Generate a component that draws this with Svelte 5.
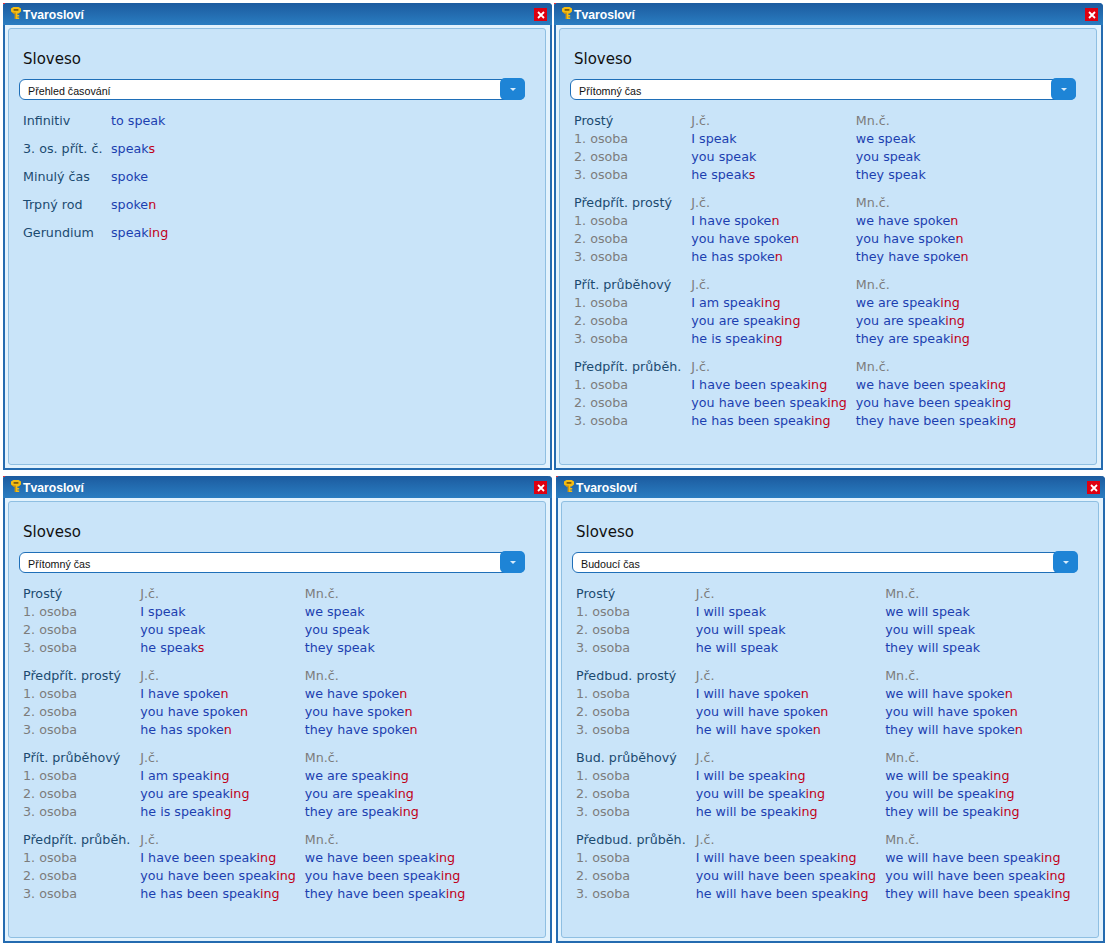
<script>
  const present = [
    { t: 'Prostý', s: [[['I speak', ''], ['we speak', '']], [['you speak', ''], ['you speak', '']], [['he speak', 's'], ['they speak', '']]] },
    { t: 'Předpřít. prostý', s: [[['I have spoke', 'n'], ['we have spoke', 'n']], [['you have spoke', 'n'], ['you have spoke', 'n']], [['he has spoke', 'n'], ['they have spoke', 'n']]] },
    { t: 'Přít. průběhový', s: [[['I am speak', 'ing'], ['we are speak', 'ing']], [['you are speak', 'ing'], ['you are speak', 'ing']], [['he is speak', 'ing'], ['they are speak', 'ing']]] },
    { t: 'Předpřít. průběh.', s: [[['I have been speak', 'ing'], ['we have been speak', 'ing']], [['you have been speak', 'ing'], ['you have been speak', 'ing']], [['he has been speak', 'ing'], ['they have been speak', 'ing']]] }
  ];
  const future = [
    { t: 'Prostý', s: [[['I will speak', ''], ['we will speak', '']], [['you will speak', ''], ['you will speak', '']], [['he will speak', ''], ['they will speak', '']]] },
    { t: 'Předbud. prostý', s: [[['I will have spoke', 'n'], ['we will have spoke', 'n']], [['you will have spoke', 'n'], ['you will have spoke', 'n']], [['he will have spoke', 'n'], ['they will have spoke', 'n']]] },
    { t: 'Bud. průběhový', s: [[['I will be speak', 'ing'], ['we will be speak', 'ing']], [['you will be speak', 'ing'], ['you will be speak', 'ing']], [['he will be speak', 'ing'], ['they will be speak', 'ing']]] },
    { t: 'Předbud. průběh.', s: [[['I will have been speak', 'ing'], ['we will have been speak', 'ing']], [['you will have been speak', 'ing'], ['you will have been speak', 'ing']], [['he will have been speak', 'ing'], ['they will have been speak', 'ing']]] }
  ];
  const overview = [
    ['Infinitiv', 'to speak', ''],
    ['3. os. přít. č.', 'speak', 's'],
    ['Minulý čas', 'spoke', ''],
    ['Trpný rod', 'spoke', 'n'],
    ['Gerundium', 'speak', 'ing']
  ];
  const windows = [
    { sel: 'Přehled časování', cls: 'w1' },
    { sel: 'Přítomný čas', groups: present, cls: 'w2' },
    { sel: 'Přítomný čas', groups: present, cls: 'w3' },
    { sel: 'Budoucí čas', groups: future, cls: 'w4' }
  ];
</script>

<div class="desk">
  {#each windows as w}
    <section class="win {w.cls}">
      <header class="bar">
        <svg class="key" width="10" height="12" viewBox="0 0 10 12" aria-hidden="true">
          <path d="M2.4 0H7.6L10 1.6V4.4L7.6 6.4H6.4V8H8.2V9.4H6.4V10.4H8.2V12H3.8V6.4H2.4L0 4.4V1.6Z" fill="#f5bd12"/>
          <path d="M0 4.4L2.4 6.4H3.8V12H4.8V5.4H2.6Z" fill="#c98c0a"/>
          <rect x="2.6" y="2" width="4.8" height="1.8" fill="#7d5c10"/>
        </svg>
        <span class="title">Tvarosloví</span>
        <span class="close">
          <svg width="8" height="8" viewBox="0 0 8 8" aria-hidden="true"><path d="M1 1L7 7M7 1L1 7" stroke="#fff" stroke-width="1.8"/></svg>
        </span>
      </header>
      <div class="panel">
        <h2>Sloveso</h2>
        <div class="select">
          <span class="val">{w.sel}</span>
          <span class="btn"><i></i></span>
        </div>
        {#if w.groups}
          <table>
            <tbody>
              {#each w.groups as g, gi}
                <tr class:gap={gi > 0}>
                  <td class="head">{g.t}</td><td class="num second">J.č.</td><td class="num">Mn.č.</td>
                </tr>
                {#each g.s as row, i}
                  <tr>
                    <td class="num">{i + 1}. osoba</td>
                    {#each row as c}
                      <td class="form second">{c[0]}<b>{c[1]}</b></td>
                    {/each}
                  </tr>
                {/each}
              {/each}
            </tbody>
          </table>
        {:else}
          <div class="over">
            {#each overview as r}
              <span class="head">{r[0]}</span><span class="form">{r[1]}<b>{r[2]}</b></span>
            {/each}
          </div>
        {/if}
      </div>
    </section>
  {/each}
</div>

<style>
  :global(body) { margin: 0; background: #fff; }
  .desk {
    width: 1109px;
    height: 945px;
    box-sizing: border-box;
    padding: 3px 0 0 3px;
    display: grid;
    grid-template-columns: 551px 550px;
    grid-template-rows: 473px 466px;
    font-family: "DejaVu Sans", sans-serif;
    font-size: 12.7px;
  }
  .win {
    position: relative;
    width: 549px;
    height: 467px;
    box-sizing: border-box;
    border: 2px solid #246bb0;
    border-top: 0;
    border-radius: 3px 4px 0 0;
    background: #e2f2fd;
    display: flex;
    flex-direction: column;
  }
  .win::before {
    content: "";
    position: absolute;
    z-index: 1;
    top: 0;
    left: -2px;
    width: 2px;
    height: 1px;
    background: #e0303a;
  }
  .w4 { margin-left: 2px; }
  .bar {
    height: 22px;
    flex: none;
    margin: 0 -2px;
    padding: 0 5px 0 8px;
    display: flex;
    align-items: center;
    border-radius: 3px 4px 0 0;
    background: linear-gradient(#1c5b9f, #2a7dc1);
  }
  .key { flex: none; margin-top: -2px; }
  .title {
    margin: 2px 0 0 2px;
    color: #fff;
    font: bold 12.2px "Liberation Sans", sans-serif;
  }
  .close {
    margin-left: auto;
    margin-top: 1px;
    width: 13px;
    height: 13px;
    background: #df0010;
    display: flex;
    align-items: center;
    justify-content: center;
  }
  .panel {
    flex: none;
    width: 538px;
    height: 437px;
    box-sizing: border-box;
    margin: 3px 0 0 3px;
    padding: 0 15px 0 10px;
    background: #c9e4f9;
    border: 1px solid #8fbfe2;
    border-radius: 3px;
  }
  h2 {
    margin: 21px 0 0 4px;
    height: 19px;
    font: 400 15px/19px "DejaVu Sans", sans-serif;
    color: #111;
  }
  .select {
    margin: 10px 0 0 0;
    width: 506px;
    height: 21px;
    box-sizing: border-box;
    border: 1px solid #1f6fb8;
    border-radius: 6px;
    background: #fff;
    display: flex;
    align-items: center;
    position: relative;
  }
  .val {
    margin: 2px 0 0 8px;
    color: #111;
    font: 10.7px "Liberation Sans", sans-serif;
  }
  .btn {
    position: absolute;
    right: -1px;
    top: -2px;
    width: 25px;
    height: 22px;
    background: #1e84d6;
    border-radius: 5px;
    display: flex;
    align-items: center;
    justify-content: center;
  }
  .btn i {
    width: 0;
    height: 0;
    border: 3.5px solid transparent;
    border-top: 3.5px solid #d8ecfb;
    border-bottom: 0;
  }
  table {
    margin: 12px 0 0 4px;
    border-collapse: collapse;
  }
  td {
    padding: 0 10px 0 0;
    height: 18px;
    line-height: 18px;
    white-space: nowrap;
  }
  td.second { padding-right: 9px; }
  tr.gap td { height: 28px; padding-top: 10px; box-sizing: border-box; }
  .head { color: #1b4a70; }
  .num { color: #7c7c7c; }
  .form { color: #1c3fb0; }
  b { font-weight: 400; color: #c00018; }
  .over {
    margin: 12px 0 0 4px;
    display: grid;
    grid-template-columns: 88px 1fr;
    grid-auto-rows: 28px;
    line-height: 18px;
  }
</style>
